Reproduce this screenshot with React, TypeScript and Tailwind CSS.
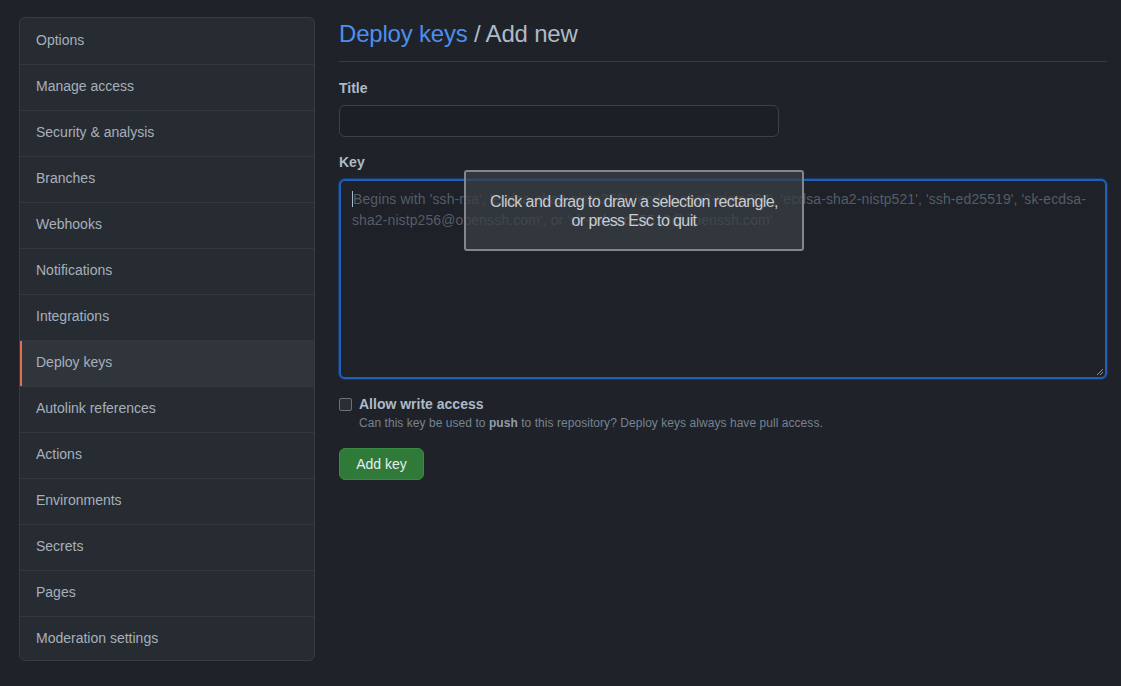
import React from 'react'

const items = [
  'Options', 'Manage access', 'Security & analysis', 'Branches', 'Webhooks',
  'Notifications', 'Integrations', 'Deploy keys', 'Autolink references', 'Actions',
  'Environments', 'Secrets', 'Pages', 'Moderation settings',
]

export default function App() {
  return (
    <div className="min-h-[686px] w-full bg-[#1f2228] text-[#adbac7] font-['Liberation_Sans',Arial,sans-serif] text-[14px]">
      <div className="flex gap-[24px] pl-[19px] pr-[14px] pt-[17px]">
        <nav className="w-[296px] shrink-0 rounded-md border border-[#373c43] bg-[#272c33] overflow-hidden">
          {items.map((it, i) => (
            <div
              key={it}
              className={
                'relative flex items-center pl-[16px] text-[#a6b0bc] ' +
                (i === items.length - 1 ? 'h-[44px] pb-[1px] ' : 'h-[46px] pb-[2px] ') +
                (i > 0 ? 'border-t border-[#33383f] ' : '') +
                (it === 'Deploy keys' ? 'bg-[#30353c]' : '')
              }
            >
              {it === 'Deploy keys' && <span className="absolute left-0 top-0 bottom-0 w-[2px] bg-[#e46f52]" />}
              {it}
            </div>
          ))}
        </nav>

        <main className="flex-1 relative">
          <div className="border-b border-[#373c43] pb-[12px]">
            <h1 className="text-[24px] leading-[32px] text-[#adbac7] pt-[1px] -mb-[1px] tracking-[-0.2px]">
              <span className="text-[#4c8ff0]">Deploy keys</span> / Add new
            </h1>
          </div>

          <div className="mt-[16px]">
            <label className="block font-bold text-[#adbac7] leading-[20px]">Title</label>
            <div className="mt-[7px] w-[440px] h-[32px] rounded-md border border-[#3c4148] bg-[#1c1f25]" />
          </div>

          <div className="mt-[15px]">
            <label className="block font-bold text-[#adbac7] leading-[20px]">Key</label>
            <div className="mt-[7px] h-[200px] rounded-md border-2 border-[#1f5fb8] bg-[#1e2127] shadow-[0_0_0_1px_#17386a] relative">
              <div className="pl-[11px] pr-[8px] pt-[8px] leading-[21px] text-[#545d68] tracking-[0.1px]">
                <span className="border-l border-[#adbac7]" />Begins with 'ssh-rsa', 'ecdsa-sha2-nistp256', 'ecdsa-sha2-nistp384', 'ecdsa-sha2-nistp521', 'ssh-ed25519', 'sk-ecdsa-sha2-nistp256@openssh.com', or 'sk-ssh-ed25519@openssh.com'
              </div>
              <svg className="absolute right-[1px] bottom-[1px]" width="8" height="8" viewBox="0 0 8 8">
                <path d="M1 7L7 1M4 7L7 4" stroke="#8b949e" strokeWidth="1" />
              </svg>
            </div>
          </div>

          <div className="mt-[16px] flex gap-[7px]">
            <div className="mt-[3px] w-[13px] h-[13px] rounded-[2px] border border-[#6b7178] bg-[#2a2e35]" />
            <div>
              <div className="font-bold leading-[18px] text-[#adbac7]">Allow write access</div>
              <div className="text-[12px] leading-[20px] text-[#768390] tracking-[0.05px]">
                Can this key be used to <b className="text-[#909dab]">push</b> to this repository? Deploy keys always have pull access.
              </div>
            </div>
          </div>

          <button className="mt-[15px] h-[32px] w-[85px] rounded-md bg-[#2f7a38] border border-[#3a8a43] text-[#e6edf3] text-[14px]">
            Add key
          </button>

          <div className="absolute left-[125px] top-[153px] w-[340px] h-[81px] rounded-[3px] border-2 border-[#82878d] bg-[#3a3f46]/75 flex flex-col items-center justify-center text-[16px] leading-[19px] text-[#c8ccd1] tracking-[-0.6px]">
            <div>Click and drag to draw a selection rectangle,</div>
            <div>or press Esc to quit</div>
          </div>
        </main>
      </div>
    </div>
  )
}
